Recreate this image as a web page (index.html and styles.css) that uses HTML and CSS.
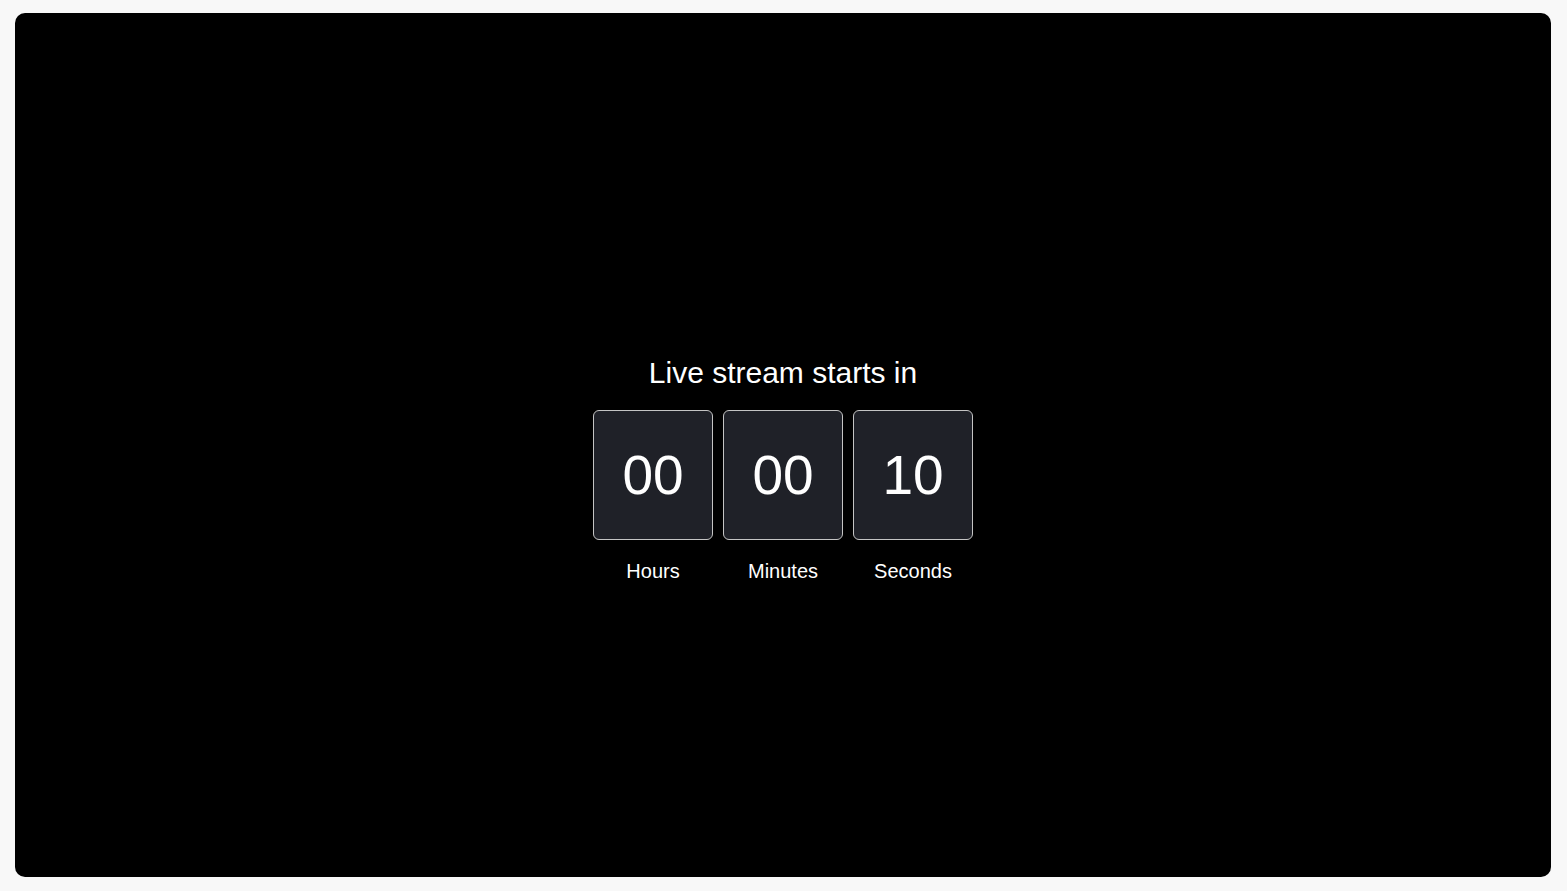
FILE: index.html
```html
<!DOCTYPE html>
<html>
<head>
<meta charset="utf-8">
<link rel="stylesheet" href="styles.css">
</head>
<body>
<div class="player">
  <div class="countdown">
    <div class="title">Live stream starts in</div>
    <div class="units">
      <div class="unit"><div class="box">00</div><div class="label">Hours</div></div>
      <div class="unit"><div class="box">00</div><div class="label">Minutes</div></div>
      <div class="unit"><div class="box">10</div><div class="label">Seconds</div></div>
    </div>
  </div>
</div>
</body>
</html>
```
FILE: styles.css
```css
html, body {
  margin: 0;
  padding: 0;
  height: 100%;
}
body {
  background: #f8f8f8;
  font-family: "Liberation Sans", Arial, sans-serif;
  padding: 13px 16px 14px 15px;
  box-sizing: border-box;
}
.player {
  height: 100%;
  background: #000;
  border-radius: 10px;
  display: flex;
  align-items: center;
  justify-content: center;
  padding-top: 49px;
  box-sizing: border-box;
}
.countdown {
  display: flex;
  flex-direction: column;
  align-items: center;
  color: #fff;
}
.title {
  font-size: 30px;
  line-height: 32px;
  margin-bottom: 21px;
}
.units {
  display: flex;
  gap: 10px;
}
.unit {
  display: flex;
  flex-direction: column;
  align-items: center;
}
.box {
  width: 120px;
  height: 130px;
  box-sizing: border-box;
  background: #1f2128;
  border: 1px solid #c4c4c4;
  border-radius: 6px;
  display: flex;
  align-items: center;
  justify-content: center;
  font-size: 55px;
}
.label {
  margin-top: 21px;
  font-size: 20px;
  line-height: 21px;
}
```
